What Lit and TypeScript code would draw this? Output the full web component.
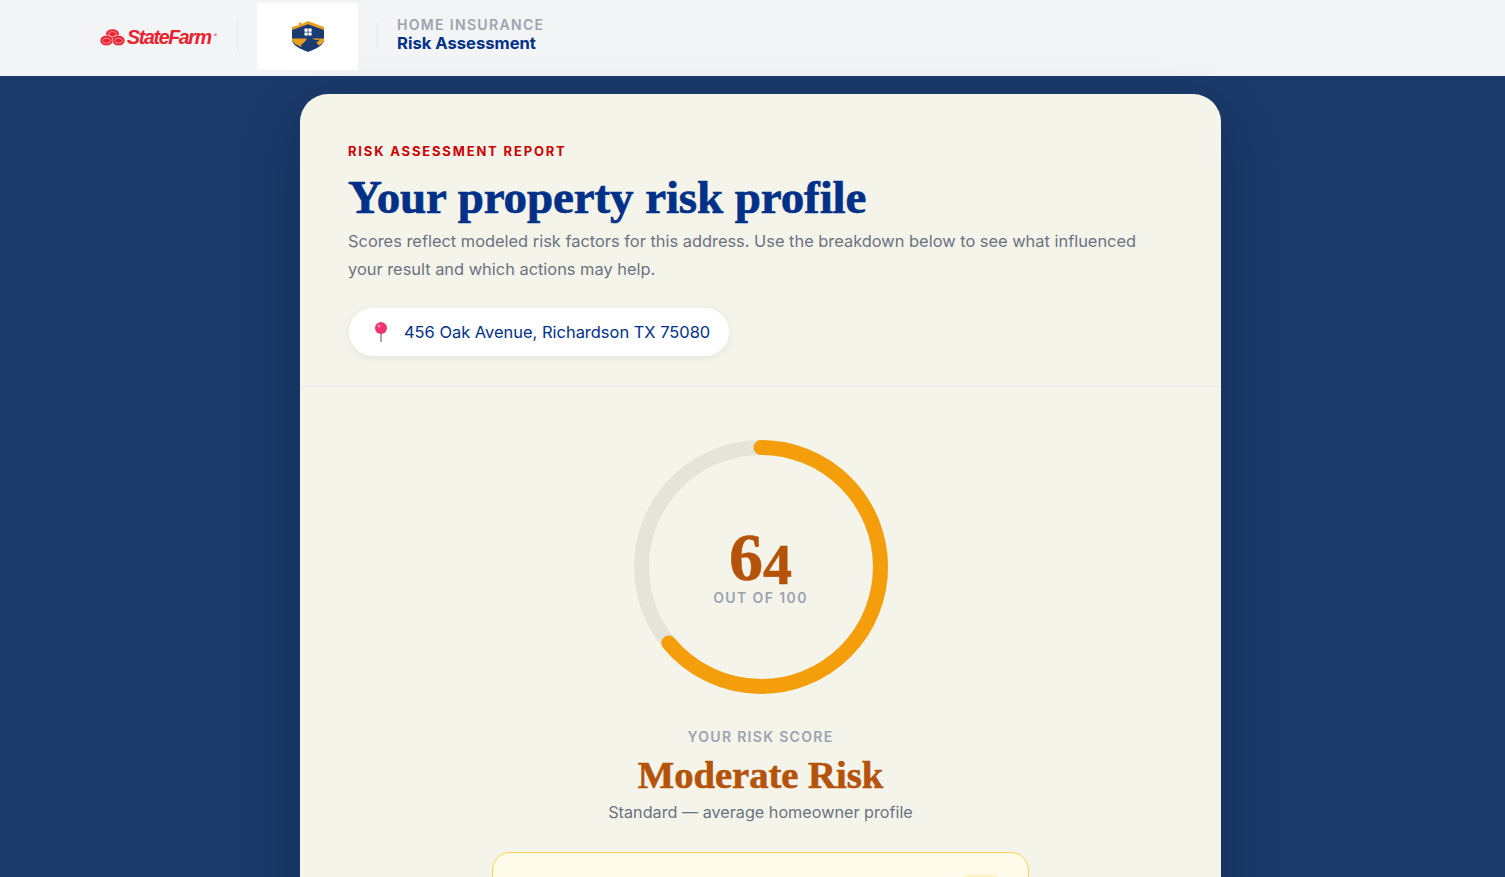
import { LitElement, html, css, svg } from "lit";
import { customElement } from "lit/decorators.js";

const SCORE = 64;
const RING_R = 119.5;

const stateFarmMark = svg`
  <g fill="#e8222e" stroke="#f3f4f6" stroke-width=".6">
    <ellipse cx="12.5" cy="5" rx="6.8" ry="5"></ellipse>
    <ellipse cx="6.500" cy="11.500" rx="6.400" ry="5.200"></ellipse>
    <ellipse cx="18.500" cy="11.500" rx="6.400" ry="5.200"></ellipse>
  </g>
  <g fill="none" stroke="#f9a9ad" stroke-width=".8">
    <ellipse cx="12.5" cy="5" rx="4" ry="2.400"></ellipse>
    <ellipse cx="6.500" cy="11.700" rx="4" ry="2.500"></ellipse>
    <ellipse cx="18.500" cy="11.700" rx="4" ry="2.500"></ellipse>
  </g>
`;

@customElement("app-root")
export class AppRoot extends LitElement {
  static styles = css`
    :host {
      display: block;
      height: 877px;
      overflow: hidden;
      background: #1a3a6b;
      font-family: "Inter", "Open Sans", sans-serif;
    }
    .topbar {
      height: 76px;
      box-sizing: border-box;
      padding: 0 0 3px 100px;
      background: #f3f4f6;
      display: flex;
      align-items: center;
    }
    .sf-logo {
      display: flex;
      align-items: center;
      gap: 2px;
      width: 137px;
      margin-top: 2px;
    }
    .sf-logo span {
      font-family: "Liberation Sans", sans-serif;
      font-size: 19.5px;
      font-weight: 700;
      font-style: italic;
      letter-spacing: -1.3px;
      color: #e8222e;
      line-height: 1;
    }
    .sf-logo sup {
      font-size: 5px;
      color: #e8222e;
      margin: -6px 0 0 1px;
    }
    .rule {
      width: 1px;
      height: 29px;
      background: #e5e7eb;
    }
    .crest {
      width: 101px;
      height: 67px;
      margin-left: 19px;
      background: #fff;
      display: flex;
      align-items: center;
      justify-content: center;
    }
    .rule.second {
      margin-left: 19px;
    }
    .product {
      margin: 0 0 5px 19px;
      display: flex;
      flex-direction: column;
    }
    .product small {
      font-size: 14px;
      font-weight: 600;
      letter-spacing: 1.33px;
      line-height: 18px;
      color: #9ca3af;
    }
    .product strong {
      font-size: 16.6px;
      font-weight: 700;
      line-height: 18px;
      color: #003087;
    }
    .card {
      width: 921px;
      margin: 18px 0 0 300px;
      background: #f5f4ea;
      border-radius: 28px 28px 0 0;
      box-shadow: 0 20px 60px rgba(0, 0, 0, 0.18);
    }
    .intro {
      padding: 48px 48px 30px;
      border-bottom: 1px solid #e5e7eb;
    }
    .eyebrow {
      font-size: 13px;
      font-weight: 700;
      letter-spacing: 1.83px;
      line-height: 18px;
      color: #cc0000;
    }
    h1 {
      margin: 12px 0 0;
      font-family: "Liberation Serif", serif;
      font-size: 47px;
      font-weight: 700;
      line-height: 50px;
      letter-spacing: -0.1px;
      -webkit-text-stroke: 0.7px #003087;
      color: #003087;
    }
    .intro p {
      margin: 5px 0 0;
      max-width: 800px;
      font-size: 16.4px;
      line-height: 28px;
      color: #6b7280;
    }
    .address {
      display: inline-flex;
      align-items: center;
      gap: 14px;
      margin: 25px 0 0 1px;
      height: 48px;
      padding: 0 19px 0 23px;
      background: #fff;
      border-radius: 24px;
      box-shadow: 0 2px 8px rgba(0, 0, 0, 0.06);
      font-size: 16.46px;
      color: #003087;
    }
    .score {
      display: flex;
      flex-direction: column;
      align-items: center;
      padding-top: 53px;
    }
    .ring {
      position: relative;
      width: 254px;
      height: 254px;
    }
    .ring svg {
      display: block;
    }
    .ring-value {
      position: absolute;
      inset: 0;
      padding-top: 6px;
      display: flex;
      flex-direction: column;
      align-items: center;
      justify-content: center;
    }
    .ring-value b {
      font-family: "Liberation Serif", serif;
      font-size: 68px;
      font-weight: 700;
      line-height: 48px;
      -webkit-text-stroke: 0.6px #b45309;
      color: #b45309;
    }
    .ring-value b i {
      font-style: normal;
      font-size: 58px;
      vertical-align: -4px;
    }
    .ring-value span {
      font-size: 14px;
      font-weight: 600;
      letter-spacing: 1.4px;
      line-height: 18px;
      color: #9ca3af;
    }
    .score-label {
      margin-top: 34px;
      font-size: 14px;
      font-weight: 600;
      letter-spacing: 1.3px;
      line-height: 18px;
      color: #9ca3af;
    }
    .score h2 {
      margin: 7px 0 0;
      font-family: "Liberation Serif", serif;
      font-size: 38.6px;
      font-weight: 700;
      line-height: 44px;
      -webkit-text-stroke: 0.6px #b45309;
      color: #b45309;
    }
    .score-note {
      margin-top: 2px;
      font-size: 16.2px;
      line-height: 26px;
      color: #6b7280;
    }
    .callout {
      box-sizing: border-box;
      width: 537px;
      height: 120px;
      margin-top: 27px;
      padding: 20.5px 24px 0;
      display: flex;
      justify-content: flex-end;
      background: #fffbeb;
      border: 1.5px solid #fcd34d;
      border-radius: 18px;
    }
    .callout-chip {
      width: 46px;
      height: 28px;
      border-radius: 14px;
      background: #fef3c7;
    }
  `;

  render() {
    const circumference = 2 * Math.PI * RING_R;
    const dash = (circumference * SCORE) / 100;
    return html`
      <header class="topbar">
        <div class="sf-logo">
          <svg width="25" height="17" viewBox="0 0 25 17" aria-hidden="true">${stateFarmMark}</svg>
          <span>StateFarm</span><sup>®</sup>
        </div>
        <div class="rule"></div>
        <div class="crest">
          <svg width="34" height="31" viewBox="0 0 34 31" aria-hidden="true">
            <path d="M1 8 17 2l16 6v11c0 5-8 9-16 12C9 28 1 24 1 19Z" fill="#1b3b73"></path>
            <path d="M1 9V6l7-2V1.500h2.500v1.600L17 0l16 6v3L17 3.200Z" fill="#e8a020"></path>
            <path d="M1 17.500h15l-5.500 8.500C6 24 1.500 22 1 19Zm20 0h12V19c0 2-2 4-5 5.500Z" fill="#e8a020"></path>
            <path d="M9.500 24.500 16 19l4-1.500 5 1.500 4-.5-6 5.500-5 5-3-1Z" fill="#1b3b73"></path>
            <path d="M13.500 7.500h3.200v3.200h-3.200Zm3.900 0h3.200v3.200h-3.200Zm-3.900 3.900h3.200v3.200h-3.200Zm3.900 0h3.200v3.200h-3.200Z" fill="#fff"></path>
          </svg>
        </div>
        <div class="rule second"></div>
        <div class="product">
          <small>HOME INSURANCE</small>
          <strong>Risk Assessment</strong>
        </div>
      </header>
      <main class="card">
        <section class="intro">
          <div class="eyebrow">RISK ASSESSMENT REPORT</div>
          <h1>Your property risk profile</h1>
          <p>
            Scores reflect modeled risk factors for this address. Use the breakdown below to see what
            influenced your result and which actions may help.
          </p>
          <div class="address">
            <svg width="18" height="20" viewBox="0 0 18 20" aria-hidden="true">
              <rect x="8" y="8" width="2" height="12" fill="#a9a3b5"></rect>
              <circle cx="9" cy="6" r="6" fill="#f2336f"></circle>
              <circle cx="7" cy="4" r="1.500" fill="#f98bb0"></circle>
            </svg>
            <span>456 Oak Avenue, Richardson TX 75080</span>
          </div>
        </section>
        <section class="score">
          <div class="ring">
            <svg width="254" height="254" viewBox="0 0 254 254" aria-hidden="true">
              <circle cx="127" cy="127" r=${RING_R} fill="none" stroke="#e5e4da" stroke-width="15"></circle>
              <circle
                cx="127"
                cy="127"
                r=${RING_R}
                fill="none"
                stroke="#f59e0b"
                stroke-width="15"
                stroke-linecap="round"
                stroke-dasharray="${dash} ${circumference}"
                transform="rotate(-90 127 127)"
              ></circle>
            </svg>
            <div class="ring-value">
              <b>6<i>4</i></b>
              <span>OUT OF 100</span>
            </div>
          </div>
          <div class="score-label">YOUR RISK SCORE</div>
          <h2>Moderate Risk</h2>
          <div class="score-note">Standard — average homeowner profile</div>
          <div class="callout"><div class="callout-chip"></div></div>
        </section>
      </main>
    `;
  }
}
